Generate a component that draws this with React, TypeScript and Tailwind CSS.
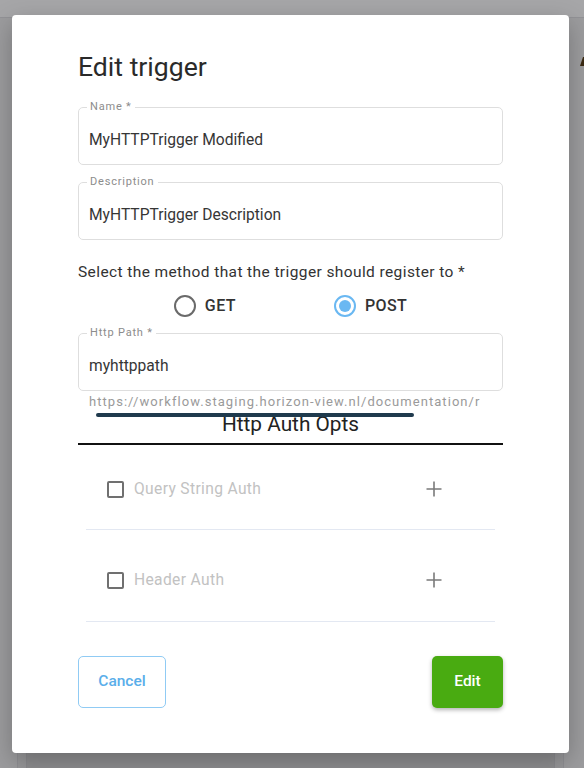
import React from "react";

function Field({ label, value }: { label: string; value: string }) {
  return (
    <fieldset className="m-0 min-w-0 rounded-[5px] border border-[#dedede] px-[8px] pb-[14px] pt-0">
      <legend className="ml-0 px-[3px] text-[11px] leading-[14px] tracking-[0.8px] text-[#8c8c8c]">{label}</legend>
      <div className="pl-[2px] pt-[16px] text-[15.6px] leading-[20px] text-[#363636]">{value}</div>
    </fieldset>
  );
}

function Radio({ label, checked }: { label: string; checked?: boolean }) {
  return (
    <div className="flex items-center gap-[9px]">
      <span
        className={
          checked
            ? "flex h-[22px] w-[22px] items-center justify-center rounded-full border-2 border-[#6ab8f2]"
            : "flex h-[22px] w-[22px] items-center justify-center rounded-full border-2 border-[#6a6a6a]"
        }
      >
        {checked ? <span className="h-[12px] w-[12px] rounded-full bg-[#6ab8f2]" /> : null}
      </span>
      <span className="text-[16px] font-medium leading-[20px] tracking-[0.4px] text-[#333333]">{label}</span>
    </div>
  );
}

function AuthRow({ label, pt, pb }: { label: string; pt: string; pb: string }) {
  return (
    <div className={`border-b border-[#e3e8f2] ${pt} ${pb}`}>
      <div className="flex h-[24px] items-center pl-[21px] pr-[52px]">
        <span className="h-[17px] w-[17px] rounded-[2px] border-2 border-[#707070]" />
        <span className="ml-[10px] text-[15.6px] leading-[20px] tracking-[0.35px] text-[#c2c2c2]">{label}</span>
        <svg className="ml-auto" width="18" height="18" viewBox="0 0 18 18" fill="none">
          <path d="M9 1.5V16.5M1.5 9H16.5" stroke="#7a7a7a" strokeWidth="1.6" />
        </svg>
      </div>
    </div>
  );
}

export default function App() {
  return (
    <div className="relative h-[768px] w-[584px] overflow-hidden bg-[#9c9c9e] font-[Roboto,sans-serif]">
      {/* dimmed page behind the dialog */}
      <div className="absolute inset-x-0 top-0 h-[18px] border-b border-[#929296] bg-[#a6a6a8]" />
      <div className="absolute bottom-[-20px] left-[17px] right-[20px] top-[60px] border border-[#8f8f93] bg-[#979799]">
        <div className="absolute bottom-0 left-[8px] right-[8px] top-[40px] border-x border-[#8a8a8e] bg-[#8e8e90]" />
      </div>
      <svg className="absolute left-[578px] top-[56px]" width="6" height="10" viewBox="0 0 6 10">
        <path d="M2 10L5 1H6V10Z" fill="#3b2a12" />
      </svg>

      {/* dialog */}
      <div className="absolute left-[12px] top-[15px] flex h-[738px] w-[557px] flex-col rounded-[4px] bg-white px-[66px] shadow-[0_8px_24px_rgba(0,0,0,0.25)]">
        <h1 className="mt-[36px] text-[26.6px] font-normal leading-[31px] text-[#2a2a2a]">Edit trigger</h1>

        <div className="mt-[18px]">
          <Field label="Name *" value="MyHTTPTrigger Modified" />
        </div>
        <div className="mt-[10px]">
          <Field label="Description" value="MyHTTPTrigger Description" />
        </div>

        <p className="mt-[22px] text-[15.5px] leading-[20px] tracking-[0.4px] text-[#333333]">
          Select the method that the trigger should register to *
        </p>
        <div className="mt-[12px] flex h-[24px] items-center justify-center gap-[98px]">
          <Radio label="GET" />
          <Radio label="POST" checked />
        </div>

        <div className="mt-[8px]">
          <Field label="Http Path *" value="myhttppath" />
        </div>
        <div className="relative h-[26px] overflow-hidden">
          <div className="whitespace-nowrap pl-[11px] pt-[3px] text-[13px] leading-[16px] tracking-[1.05px] text-[#9a9a9a]">
            https://workflow.staging.horizon-view.nl/documentation/r
          </div>
          <div className="absolute bottom-0 left-[18px] h-[4px] w-[318px] rounded-full bg-[#1f3a4d]" />
        </div>
        <h2 className="-mt-[5px] text-center text-[20.8px] font-normal leading-[24px] text-[#222222]">Http Auth Opts</h2>
        <div className="mt-[7px] h-[2px] bg-[#111111]" />

        <div className="px-[8px]">
          <AuthRow label="Query String Auth" pt="pt-[32px]" pb="pb-[28px]" />
          <AuthRow label="Header Auth" pt="pt-[38px]" pb="pb-[29px]" />
        </div>

        <div className="mt-[34px] flex items-center justify-between">
          <button className="h-[52px] w-[88px] rounded-[5px] border border-[#90cbf4] bg-white text-[15.5px] font-medium text-[#5aaeea]">
            Cancel
          </button>
          <button className="h-[52px] w-[71px] rounded-[5px] bg-[#49ab11] text-[15.5px] font-medium text-white shadow-[0_2px_4px_rgba(0,0,0,0.3)]">
            Edit
          </button>
        </div>
      </div>
    </div>
  );
}
